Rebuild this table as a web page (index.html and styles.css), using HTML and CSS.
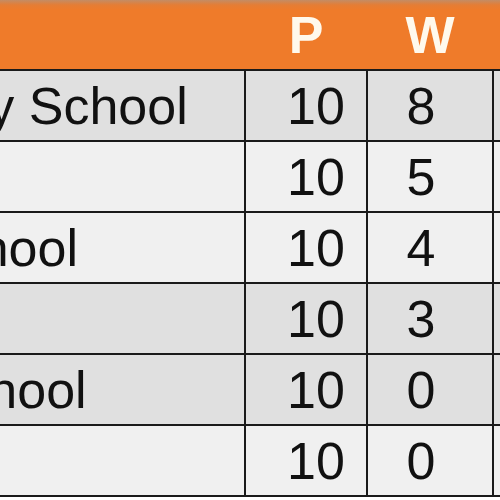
FILE: index.html
```html
<!DOCTYPE html>
<html>
<head>
<meta charset="utf-8">
<link rel="stylesheet" href="styles.css">
</head>
<body>
<div class="table">
  <div class="row head">
    <div class="cell name">School</div>
    <div class="cell p">P</div>
    <div class="cell w">W</div>
    <div class="cell d">D</div>
  </div>
  <div class="row dark">
    <div class="cell name">Milton Primary School</div>
    <div class="cell p">10</div>
    <div class="cell w">8</div>
    <div class="cell d">1</div>
  </div>
  <div class="row light">
    <div class="cell name">Northgate</div>
    <div class="cell p">10</div>
    <div class="cell w">5</div>
    <div class="cell d">2</div>
  </div>
  <div class="row light">
    <div class="cell name">Kingsway School</div>
    <div class="cell p">10</div>
    <div class="cell w">4</div>
    <div class="cell d">2</div>
  </div>
  <div class="row dark">
    <div class="cell name">Riverside</div>
    <div class="cell p">10</div>
    <div class="cell w">3</div>
    <div class="cell d">3</div>
  </div>
  <div class="row dark">
    <div class="cell name">Broadway School</div>
    <div class="cell p">10</div>
    <div class="cell w">0</div>
    <div class="cell d">2</div>
  </div>
  <div class="row light">
    <div class="cell name">Ashwood</div>
    <div class="cell p">10</div>
    <div class="cell w">0</div>
    <div class="cell d">1</div>
  </div>
</div>
</body>
</html>
```

FILE: styles.css
```css
html, body {
  margin: 0;
  padding: 0;
  background: #ffffff;
  overflow: hidden;
  width: 500px;
  height: 500px;
}

.table {
  margin-left: -330px;
  width: 900px;
  font-family: "Liberation Sans", Arial, sans-serif;
  font-size: 52px;
  color: #111111;
}

.row {
  display: grid;
  grid-template-columns: 576px 122px 126px 120px;
  height: 71px;
  box-sizing: border-box;
  border-bottom: 2px solid #1a1a1a;
}

.cell {
  display: flex;
  align-items: center;
  box-sizing: border-box;
  border-right: 2px solid #1a1a1a;
  white-space: nowrap;
  overflow: hidden;
}

.name {
  padding-left: 12px;
}

.p, .w, .d {
  justify-content: center;
}

.row .p {
  padding-left: 20px;
}

.row .w {
  padding-right: 18px;
}

.head {
  background: linear-gradient(to bottom, #c48c64 0px, #e57d35 5px, #ef7b2a 10px, #ef7b2a 100%);
  color: #fff9ec;
  font-weight: bold;
}

.head .cell {
  border-right-color: transparent;
}

.head .p {
  padding-left: 0;
}

.head .w {
  padding-right: 0;
}

.head .name {
  color: transparent;
}

.dark {
  background: #e0e0e0;
}

.light {
  background: #f0f0f0;
}
```
